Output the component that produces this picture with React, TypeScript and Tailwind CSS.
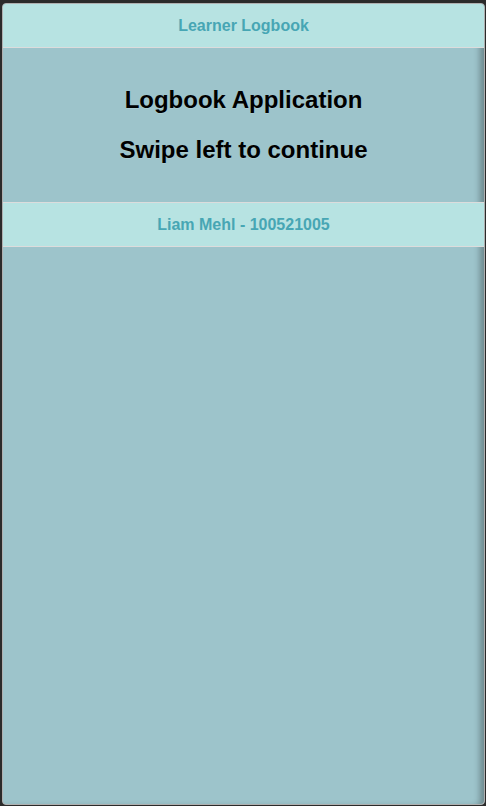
export default function App() {
  return (
    <div className="h-[806px] w-[486px] bg-[#2b2b2b] pt-[3px] pl-[2px] pr-[1px] pb-[1px]" style={{ fontFamily: '"Liberation Sans", Arial, sans-serif' }}>
      <div className="h-full w-full rounded-[4px] border border-[#b0b0b0] bg-[#9dc4cb] overflow-hidden flex flex-col shadow-[inset_-7px_0_6px_-3px_rgba(0,0,0,0.3)]">
        <div className="h-[44px] shrink-0 bg-[#b7e3e2] border-b border-[#dcdcdc] flex items-center justify-center">
          <span className="text-[16px] font-bold text-[#47a6b4]">Learner Logbook</span>
        </div>
        <div className="px-[15px] pt-[17px] pb-[17px] text-center">
          <h2 className="text-[24px] font-bold text-black my-[20px] leading-[30px] [text-shadow:0_1px_0_rgba(255,255,255,0.15)]">Logbook Application</h2>
          <h2 className="text-[24px] font-bold text-black my-[20px] leading-[30px] [text-shadow:0_1px_0_rgba(255,255,255,0.15)]">Swipe left to continue</h2>
        </div>
        <div className="h-[45px] shrink-0 bg-[#b7e3e2] border-y border-[#dcdcdc] flex items-center justify-center">
          <span className="text-[16px] font-bold text-[#47a6b4]">Liam Mehl - 100521005</span>
        </div>
        <div className="flex-1" />
      </div>
    </div>
  );
}
